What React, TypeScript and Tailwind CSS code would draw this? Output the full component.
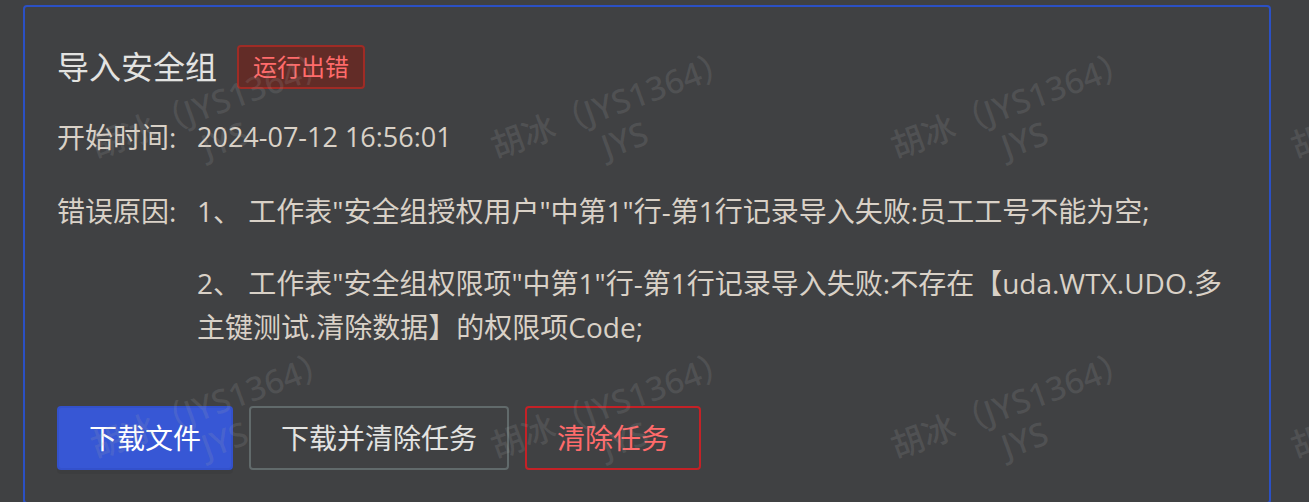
const watermarkCells = Array.from({ length: 8 }, (_, i) => i);

const errors = [
  '1、 工作表"安全组授权用户"中第1"行-第1行记录导入失败:员工工号不能为空;',
  '2、 工作表"安全组权限项"中第1"行-第1行记录导入失败:不存在【uda.WTX.UDO.多主键测试.清除数据】的权限项Code;',
];

function Watermark() {
  return (
    <div
      aria-hidden="true"
      className="pointer-events-none absolute inset-0 grid auto-rows-[300px] grid-cols-[repeat(4,400px)] overflow-hidden"
    >
      {watermarkCells.map((cell) => (
        <div key={cell} className="flex items-center justify-center pb-14 pl-9">
          <div className="-rotate-20 text-center font-['Noto_Sans','Noto_Sans_CJK_SC',sans-serif] text-[33px] leading-[38px] font-medium whitespace-nowrap text-[#aaaaaa]/16">
            <p>胡冰（JYS1364）</p>
            <p>JYS</p>
          </div>
        </div>
      ))}
    </div>
  );
}

export default function App() {
  return (
    <main
      lang="zh-CN"
      className="relative h-screen overflow-hidden bg-[#404143] pt-[5px] pr-[38px] pl-[23px] font-['Open_Sans','Noto_Sans_CJK_SC',sans-serif]"
    >
      <section className="rounded border-2 border-[#2b50c4] px-8 pt-[38px] pb-8">
        <header className="flex items-center gap-5">
          <h1 className="text-[32px] leading-[44px] text-[#e3e3e1]">导入安全组</h1>
          <span className="rounded border-2 border-[#9f2b25] bg-[#622c27] px-3.5 text-2xl leading-10 text-[#ff6b6b]">
            运行出错
          </span>
        </header>
        <dl className="mt-[26px] flex flex-col gap-[30px] text-[28px] leading-[44px] text-[#d9d1c7]">
          <div className="flex">
            <dt className="w-[140px] shrink-0">开始时间:</dt>
            <dd className="text-[27px]">2024-07-12 16:56:01</dd>
          </div>
          <div className="flex">
            <dt className="w-[140px] shrink-0">错误原因:</dt>
            <dd className="flex min-w-0 flex-1 flex-col gap-7">
              {errors.map((error) => (
                <p key={error}>{error}</p>
              ))}
            </dd>
          </div>
        </dl>
        <div className="mt-[57px] flex gap-4 text-[28px] leading-[60px]">
          <button
            type="button"
            className="rounded border-2 border-[#3351cb] bg-[#3757d5] px-[30px] text-white shadow-[0_4px_0_rgba(0,0,0,0.05)]"
          >
            下载文件
          </button>
          <button type="button" className="rounded border-2 border-[#616a6b] px-[30px] text-[#e3e3e1]">
            下载并清除任务
          </button>
          <button type="button" className="rounded border-2 border-[#c42126] px-[30px] text-[#ff6b6b]">
            清除任务
          </button>
        </div>
      </section>
      <Watermark />
    </main>
  );
}
